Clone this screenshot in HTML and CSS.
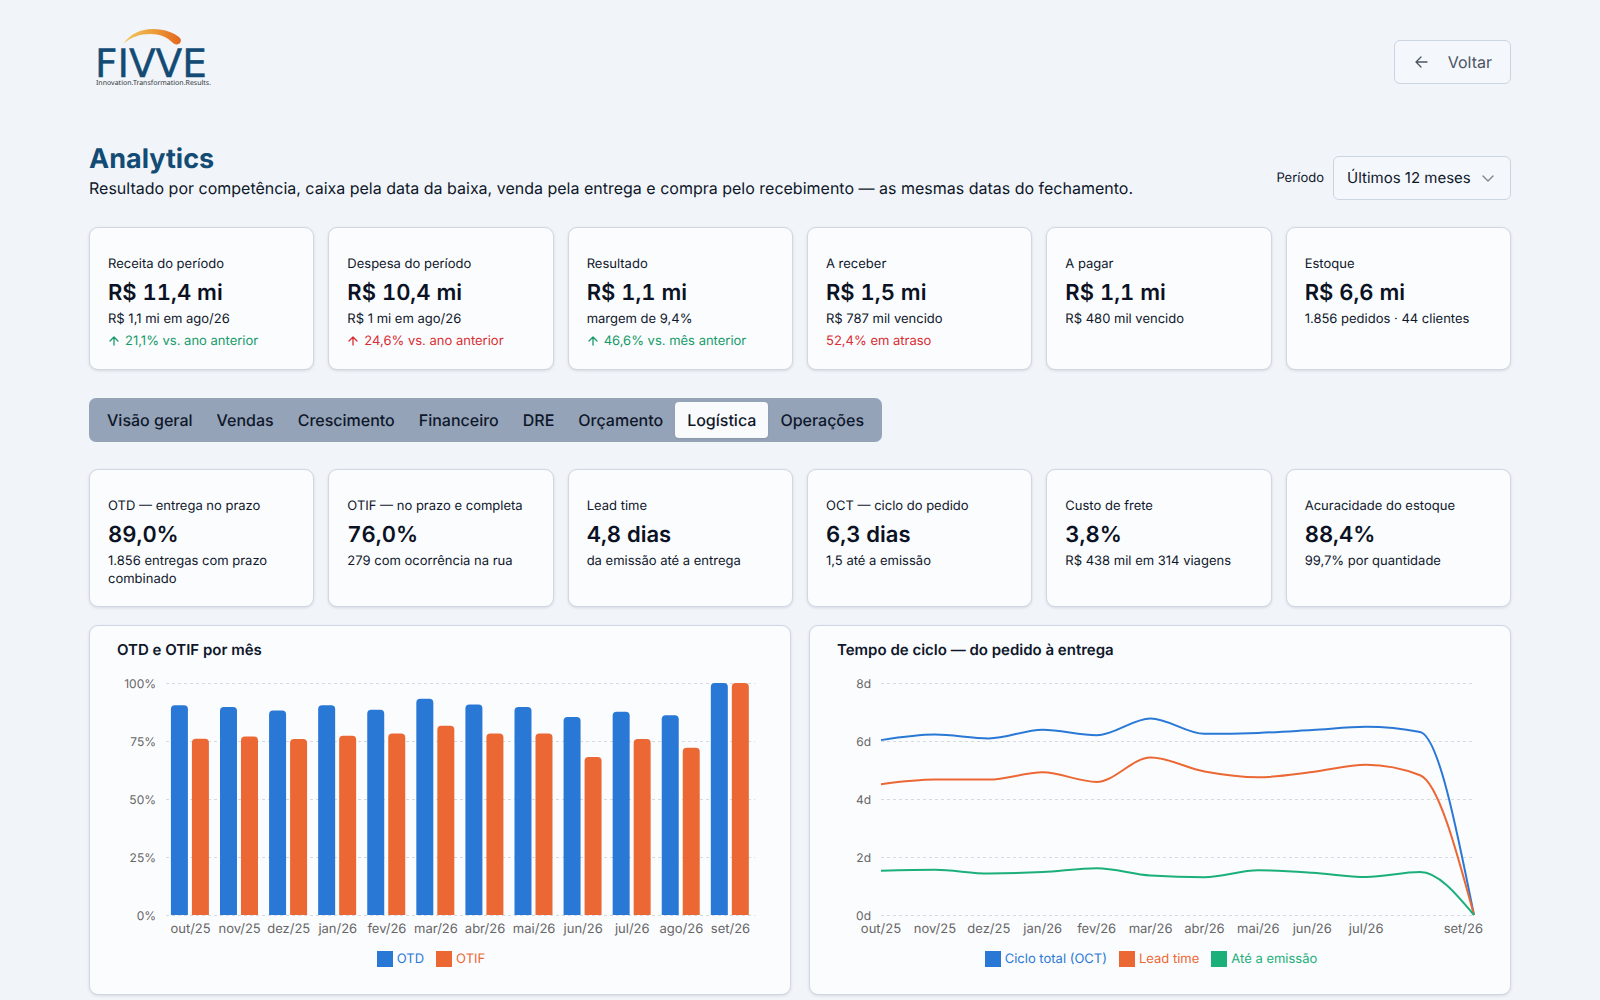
FILE: index.html
```html
<!DOCTYPE html>
<html lang="pt-BR">
<head>
<meta charset="utf-8">
<meta name="viewport" content="width=device-width, initial-scale=1">
<title>Analytics · FIVVE</title>
<link rel="stylesheet" href="styles.css">
</head>
<body>
<div class="page">
  <header class="topbar">
    <svg class="logo" viewBox="0 0 126 66" role="img" aria-label="FIVVE">
      <defs>
        <linearGradient id="arc" x1="0" x2="1" y1="0" y2="0">
          <stop offset="0" stop-color="#f0c95e"/>
          <stop offset="0.5" stop-color="#eda03c"/>
          <stop offset="1" stop-color="#e2661f"/>
        </linearGradient>
      </defs>
      <path d="M34 15C41 5 52 0 64 0C76 0 86 4 91 9C94 13 89 18 84 14C78 8 71 5 61 5C51 5 42 8 34 15Z" fill="url(#arc)"/>
      <text class="logo-name" x="6" y="48">FIVVE</text>
      <text class="logo-tag" x="7" y="56">Innovation.Transformation.Results.</text>
    </svg>
    <button type="button" class="back">
      <svg class="icon" viewBox="0 0 16 16"><path d="M14 8H3M8 3L3 8l5 5"/></svg>
      Voltar
    </button>
  </header>

  <main>
    <div class="heading">
      <div>
        <h1>Analytics</h1>
        <p class="lead">Resultado por competência, caixa pela data da baixa, venda pela entrega e compra pelo recebimento — as mesmas datas do fechamento.</p>
      </div>
      <div class="period">
        <label for="periodo">Período</label>
        <div class="select">
          <select id="periodo"><option>Últimos 12 meses</option></select>
          <svg class="chevron" viewBox="0 0 16 16"><path d="M3 6l5 5 5-5"/></svg>
        </div>
      </div>
    </div>

    <section class="cards">
      <article class="card">
        <h2>Receita do período</h2>
        <p class="value">R$ 11,4 mi</p>
        <p class="note">R$ 1,1 mi em ago/26</p>
        <p class="trend good"><svg class="up" viewBox="0 0 12 12"><path d="M6 10V2M2 6l4-4 4 4"/></svg>21,1% vs. ano anterior</p>
      </article>
      <article class="card">
        <h2>Despesa do período</h2>
        <p class="value">R$ 10,4 mi</p>
        <p class="note">R$ 1 mi em ago/26</p>
        <p class="trend bad"><svg class="up" viewBox="0 0 12 12"><path d="M6 10V2M2 6l4-4 4 4"/></svg>24,6% vs. ano anterior</p>
      </article>
      <article class="card">
        <h2>Resultado</h2>
        <p class="value">R$ 1,1 mi</p>
        <p class="note">margem de 9,4%</p>
        <p class="trend good"><svg class="up" viewBox="0 0 12 12"><path d="M6 10V2M2 6l4-4 4 4"/></svg>46,6% vs. mês anterior</p>
      </article>
      <article class="card">
        <h2>A receber</h2>
        <p class="value">R$ 1,5 mi</p>
        <p class="note">R$ 787 mil vencido</p>
        <p class="trend bad">52,4% em atraso</p>
      </article>
      <article class="card">
        <h2>A pagar</h2>
        <p class="value">R$ 1,1 mi</p>
        <p class="note">R$ 480 mil vencido</p>
      </article>
      <article class="card">
        <h2>Estoque</h2>
        <p class="value">R$ 6,6 mi</p>
        <p class="note">1.856 pedidos · 44 clientes</p>
      </article>
    </section>

    <div class="tabs" role="tablist">
      <button type="button" role="tab">Visão geral</button>
      <button type="button" role="tab">Vendas</button>
      <button type="button" role="tab">Crescimento</button>
      <button type="button" role="tab">Financeiro</button>
      <button type="button" role="tab">DRE</button>
      <button type="button" role="tab">Orçamento</button>
      <button type="button" role="tab" aria-selected="true">Logística</button>
      <button type="button" role="tab">Operações</button>
    </div>

    <section class="cards">
      <article class="card">
        <h2>OTD — entrega no prazo</h2>
        <p class="value">89,0%</p>
        <p class="note">1.856 entregas com prazo combinado</p>
      </article>
      <article class="card">
        <h2>OTIF — no prazo e completa</h2>
        <p class="value">76,0%</p>
        <p class="note">279 com ocorrência na rua</p>
      </article>
      <article class="card">
        <h2>Lead time</h2>
        <p class="value">4,8 dias</p>
        <p class="note">da emissão até a entrega</p>
      </article>
      <article class="card">
        <h2>OCT — ciclo do pedido</h2>
        <p class="value">6,3 dias</p>
        <p class="note">1,5 até a emissão</p>
      </article>
      <article class="card">
        <h2>Custo de frete</h2>
        <p class="value">3,8%</p>
        <p class="note">R$ 438 mil em 314 viagens</p>
      </article>
      <article class="card">
        <h2>Acuracidade do estoque</h2>
        <p class="value">88,4%</p>
        <p class="note">99,7% por quantidade</p>
      </article>
    </section>

    <section class="charts">
      <article class="panel">
        <h2>OTD e OTIF por mês</h2>
        <svg class="plot" id="otd-otif"></svg>
        <ul class="legend">
          <li class="blue">OTD</li>
          <li class="orange">OTIF</li>
        </ul>
      </article>
      <article class="panel">
        <h2>Tempo de ciclo — do pedido à entrega</h2>
        <svg class="plot" id="ciclo"></svg>
        <ul class="legend">
          <li class="blue">Ciclo total (OCT)</li>
          <li class="orange">Lead time</li>
          <li class="green">Até a emissão</li>
        </ul>
      </article>
    </section>
  </main>
</div>
<script src="charts.js"></script>
</body>
</html>
```
FILE: styles.css
```css
* {
  box-sizing: border-box;
}

body {
  margin: 0;
  background: #f1f5f9;
  color: #0f172a;
  font-family: Inter, "Liberation Sans", sans-serif;
  font-size: 16px;
  line-height: 24px;
  text-rendering: geometricPrecision;
}

h1, h2, p, ul {
  margin: 0;
  padding: 0;
}

button, select {
  font: inherit;
  text-rendering: inherit;
}

.page {
  padding: 26px 89px 32px;
}

.topbar {
  display: flex;
  align-items: center;
  justify-content: space-between;
  height: 72px;
}

.logo {
  width: 126px;
  height: 66px;
  overflow: visible;
}

.logo-name {
  fill: #134b75;
  stroke: #134b75;
  stroke-width: 0.4;
  font: 39px "DejaVu Sans", sans-serif;
}

.logo-tag {
  fill: #33373d;
  font: 7px "Noto Sans", sans-serif;
}

.back {
  display: flex;
  align-items: center;
  gap: 19px;
  height: 44px;
  padding: 0 18px;
  border: 1px solid #cbd5e1;
  border-radius: 6px;
  background: #f4f7fb;
  color: #4b5563;
}

.icon, .chevron, .up {
  fill: none;
  stroke: currentColor;
  stroke-width: 1.3;
  stroke-linecap: round;
  stroke-linejoin: round;
}

.icon {
  width: 16px;
  height: 16px;
}

.heading {
  display: flex;
  align-items: flex-end;
  justify-content: space-between;
  margin-top: 43px;
}

h1 {
  color: #134b75;
  font-size: 27px;
  line-height: 35px;
  font-weight: 700;
}

.period {
  display: flex;
  align-items: center;
  gap: 9px;
  font-size: 13px;
}

.select {
  position: relative;
  font-size: 15px;
}

.select select {
  width: 178px;
  height: 44px;
  padding: 0 12px 0 13px;
  border: 1px solid #cbd5e1;
  border-radius: 6px;
  background: #f4f7fb;
  color: #0f172a;
  appearance: none;
}

.chevron {
  position: absolute;
  top: 14px;
  right: 15px;
  width: 16px;
  height: 16px;
  color: #7b828c;
  pointer-events: none;
}

.cards {
  display: grid;
  grid-template-columns: repeat(6, 1fr);
  gap: 14px;
  margin-top: 27px;
}

.card, .panel {
  border: 1px solid #d0d7e2;
  border-radius: 9px;
  background: #fbfcfe;
  box-shadow: 0 1px 3px rgb(15 23 42 / 12%);
}

.card {
  padding: 27px 18px 18px;
}

.card h2, .note, .trend {
  font-size: 13px;
  line-height: 18px;
  font-weight: 400;
}

.value {
  margin: 6px 0 3px;
  color: #0b1224;
  font-size: 22px;
  line-height: 28px;
  font-weight: 600;
  font-variant-numeric: tabular-nums;
}

.trend {
  display: flex;
  align-items: center;
  gap: 5px;
  height: 20px;
  margin-top: 3px;
}

.up {
  width: 12px;
  height: 12px;
}

.good {
  color: #169b68;
}

.bad {
  color: #d92d32;
}

.tabs {
  display: flex;
  width: fit-content;
  margin-top: 28px;
  padding: 4px 6px;
  border-radius: 7px;
  background: #94a3b8;
}

.tabs button {
  height: 36px;
  padding: 0 12px;
  border: 0;
  border-radius: 4px;
  background: none;
  color: #0f172a;
  font-weight: 500;
}

.tabs [aria-selected="true"] {
  background: #f8fafc;
  box-shadow: 0 1px 2px rgb(15 23 42 / 10%);
}

.charts {
  display: grid;
  grid-template-columns: repeat(2, minmax(0, 1fr));
  gap: 18px;
  margin-top: 18px;
}

.panel {
  padding: 12px 27px 23px;
}

.panel h2 {
  font-size: 15px;
  line-height: 24px;
  font-weight: 600;
}

.plot {
  display: block;
  width: 100%;
  height: 266px;
  margin-top: 12px;
}

.plot text {
  fill: #666;
  font-size: 13px;
}

.plot .tick {
  font-size: 12px;
}

.grid {
  stroke: #d5d9e0;
  stroke-dasharray: 3 3;
}

.line {
  fill: none;
  stroke-width: 2;
}

.legend {
  display: flex;
  justify-content: center;
  gap: 12px;
  margin-top: 7px;
  padding-right: 18px;
  list-style: none;
  font-size: 13px;
}

.legend li {
  display: flex;
  align-items: center;
  gap: 4px;
}

.legend li::before {
  content: "";
  width: 16px;
  height: 16px;
  background: currentColor;
}

.blue {
  color: #2a78d6;
}

.orange {
  color: #eb6834;
}

.green {
  color: #1baf7a;
}
```
FILE: charts.js
```js
const months = ['out/25', 'nov/25', 'dez/25', 'jan/26', 'fev/26', 'mar/26',
  'abr/26', 'mai/26', 'jun/26', 'jul/26', 'ago/26', 'set/26'];
const colors = ['#2a78d6', '#eb6834', '#1baf7a'];
const top0 = 9;
const bottom = 241;

const service = [
  [90.4, 89.7, 88.2, 90.4, 88.5, 93.2, 90.7, 89.7, 85.3, 87.6, 86.1, 100],
  [76, 76.9, 75.9, 77.3, 78.2, 81.6, 78.2, 78.2, 68.1, 75.9, 72.1, 100]
];
const cycle = [
  [6.03, 6.22, 6.09, 6.39, 6.2, 6.78, 6.25, 6.28, 6.38, 6.49, 6.31, 0],
  [4.51, 4.67, 4.67, 4.92, 4.59, 5.43, 4.95, 4.75, 4.93, 5.18, 4.82, 0],
  [1.53, 1.56, 1.43, 1.48, 1.61, 1.36, 1.3, 1.54, 1.46, 1.31, 1.48, 0]
];

const scaleY = (v, max) => bottom - (v / max) * (bottom - top0);

function axes(left, right, ticks, unit) {
  const max = ticks[ticks.length - 1];
  return ticks.map(t => {
    const y = scaleY(t, max);
    return `<line class="grid" x1="${left}" x2="${right}" y1="${y + .5}" y2="${y + .5}"/>` +
      `<text class="tick" x="${left - 10}" y="${y + 5}" text-anchor="end">${t}${unit}</text>`;
  }).join('');
}

function label(x, text, anchor = 'middle') {
  return `<text x="${x}" y="${bottom + 18}" text-anchor="${anchor}">${text}</text>`;
}

// Monotone cubic interpolation: keeps the curve inside its data points.
function curve(xs, ys) {
  const n = xs.length;
  const slope = i => (ys[i + 1] - ys[i]) / (xs[i + 1] - xs[i]);
  const m = xs.map((_, i) => {
    if (i === 0 || i === n - 1) return null;
    const a = slope(i - 1), b = slope(i);
    return (Math.sign(a) + Math.sign(b)) * Math.min(Math.abs(a), Math.abs(b), Math.abs(a + b) / 4) || 0;
  });
  m[0] = (3 * slope(0) - m[1]) / 2;
  m[n - 1] = (3 * slope(n - 2) - m[n - 2]) / 2;
  let d = `M${xs[0]},${ys[0]}`;
  for (let i = 1; i < n; i++) {
    const h = (xs[i] - xs[i - 1]) / 3;
    d += `C${xs[i - 1] + h},${ys[i - 1] + h * m[i - 1]} ${xs[i] - h},${ys[i] - h * m[i]} ${xs[i]},${ys[i]}`;
  }
  return d;
}

function drawBars(svg) {
  const left = 49, right = svg.clientWidth - 8;
  const step = (right - left) / months.length;
  const gap = 4, w = Math.floor((step * .8 - gap) / 2);
  let out = axes(left, right, [0, 25, 50, 75, 100], '%');
  months.forEach((month, i) => {
    const x0 = left + (i + .1) * step;
    service.forEach((values, s) => {
      const x = x0 + s * (w + gap), y = scaleY(values[i], 100), r = 4;
      out += `<path fill="${colors[s]}" d="M${x},${bottom}V${y + r}q0,-${r} ${r},-${r}h${w - 2 * r}q${r},0 ${r},${r}V${bottom}Z"/>`;
    });
    out += label(left + (i + .5) * step, month);
  });
  svg.innerHTML = out;
}

function drawLines(svg) {
  const width = svg.clientWidth, left = 44, right = width - 9;
  const xs = months.map((_, i) => left + i * (right - left) / (months.length - 1));
  let out = axes(left, right, [0, 2, 4, 6, 8], 'd');
  cycle.forEach((values, s) => {
    out += `<path class="line" stroke="${colors[s]}" d="${curve(xs, values.map(v => scaleY(v, 8)))}"/>`;
  });
  // The last label hugs the right edge, so the one before it is left out.
  months.slice(0, -2).forEach((month, i) => { out += label(xs[i], month); });
  svg.innerHTML = out + label(width, months[months.length - 1], 'end');
}

function draw() {
  drawBars(document.getElementById('otd-otif'));
  drawLines(document.getElementById('ciclo'));
}

draw();
window.addEventListener('resize', draw);
```
